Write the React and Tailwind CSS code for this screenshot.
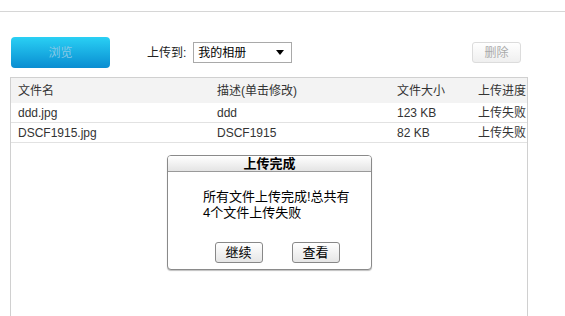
const FONT = { fontFamily: '"Liberation Sans", Arial, "Noto Sans CJK SC", sans-serif' };

const ROWS = [
  { name: 'ddd.jpg', desc: 'ddd', size: '123 KB', status: '上传失败' },
  { name: 'DSCF1915.jpg', desc: 'DSCF1915', size: '82 KB', status: '上传失败' },
];

function Row({ cells, head }) {
  return (
    <div className={`flex items-center text-[12px] text-[#333] ${head ? 'h-[25px] bg-[#f3f3f3]' : 'h-[20px] border-b border-[#e2e2e2]'}`}>
      <div className="w-[199px] pl-[7px]">{cells[0]}</div>
      <div className="w-[180px] pl-[7px]">{cells[1]}</div>
      <div className="w-[81px] pl-[7px]">{cells[2]}</div>
      <div className="flex-1 pl-[7px]">{cells[3]}</div>
    </div>
  );
}

export default function App() {
  return (
    <div className="relative w-[565px] h-[316px] overflow-hidden bg-white flex flex-col" style={FONT}>
      <div className="h-[12px] border-b border-[#d6d6d6] shrink-0" />

      {/* Toolbar */}
      <div className="mt-[25px] h-[31px] flex items-center pl-[11px] shrink-0">
        <button className="w-[99px] h-[31px] rounded-[4px] bg-gradient-to-b from-[#2ad0f4] to-[#0a8dd1] text-[12px] text-[#86c8e6]">
          浏览
        </button>
        <span className="ml-[37px] text-[12px] text-[#222]">上传到:</span>
        <div className="ml-[7px] w-[99px] h-[21px] border border-[#a9a9a9] flex items-center justify-between pl-[4px] pr-[7px] text-[12px] text-black">
          <span>我的相册</span>
          <svg width="8" height="5" viewBox="0 0 8 5"><path d="M0 0h8L4 5z" fill="#000" /></svg>
        </div>
        <button className="ml-auto mr-[44px] w-[49px] h-[21px] rounded-[3px] border border-[#dcdcdc] bg-gradient-to-b from-white to-[#efefef] text-[12px] text-[#aaa]">
          删除
        </button>
      </div>

      {/* Table */}
      <div className="mt-[9px] ml-[10px] w-[518px] flex-1 border-t border-l border-r border-[#d0d0d0]">
        <Row head cells={['文件名', '描述(单击修改)', '文件大小', '上传进度']} />
        {ROWS.map((r) => (
          <Row key={r.name} cells={[r.name, r.desc, r.size, r.status]} />
        ))}
      </div>

      {/* Dialog */}
      <div className="absolute left-[167px] top-[155px] w-[205px] h-[115px] rounded-[4px] border border-[#8a8a8a] bg-white shadow-[0_1px_1px_rgba(0,0,0,0.25)] flex flex-col overflow-hidden">
        <div className="h-[16px] border-b border-[#9a9a9a] bg-gradient-to-b from-white to-[#e4e4e4] flex items-center justify-center text-[13px] font-bold text-black">
          上传完成
        </div>
        <div className="pl-[35px] pt-[17px] text-[13px] leading-[16px] text-black">
          <div>所有文件上传完成!总共有</div>
          <div>4个文件上传失败</div>
        </div>
        <div className="mt-auto mb-[6px] flex justify-center gap-[29px] pl-[15px]">
          <button className="w-[48px] h-[21px] rounded-[3px] border border-[#888] bg-gradient-to-b from-white to-[#e6e6e6] text-[13px] text-black">继续</button>
          <button className="w-[48px] h-[21px] rounded-[3px] border border-[#888] bg-gradient-to-b from-white to-[#e6e6e6] text-[13px] text-black">查看</button>
        </div>
      </div>
    </div>
  );
}
